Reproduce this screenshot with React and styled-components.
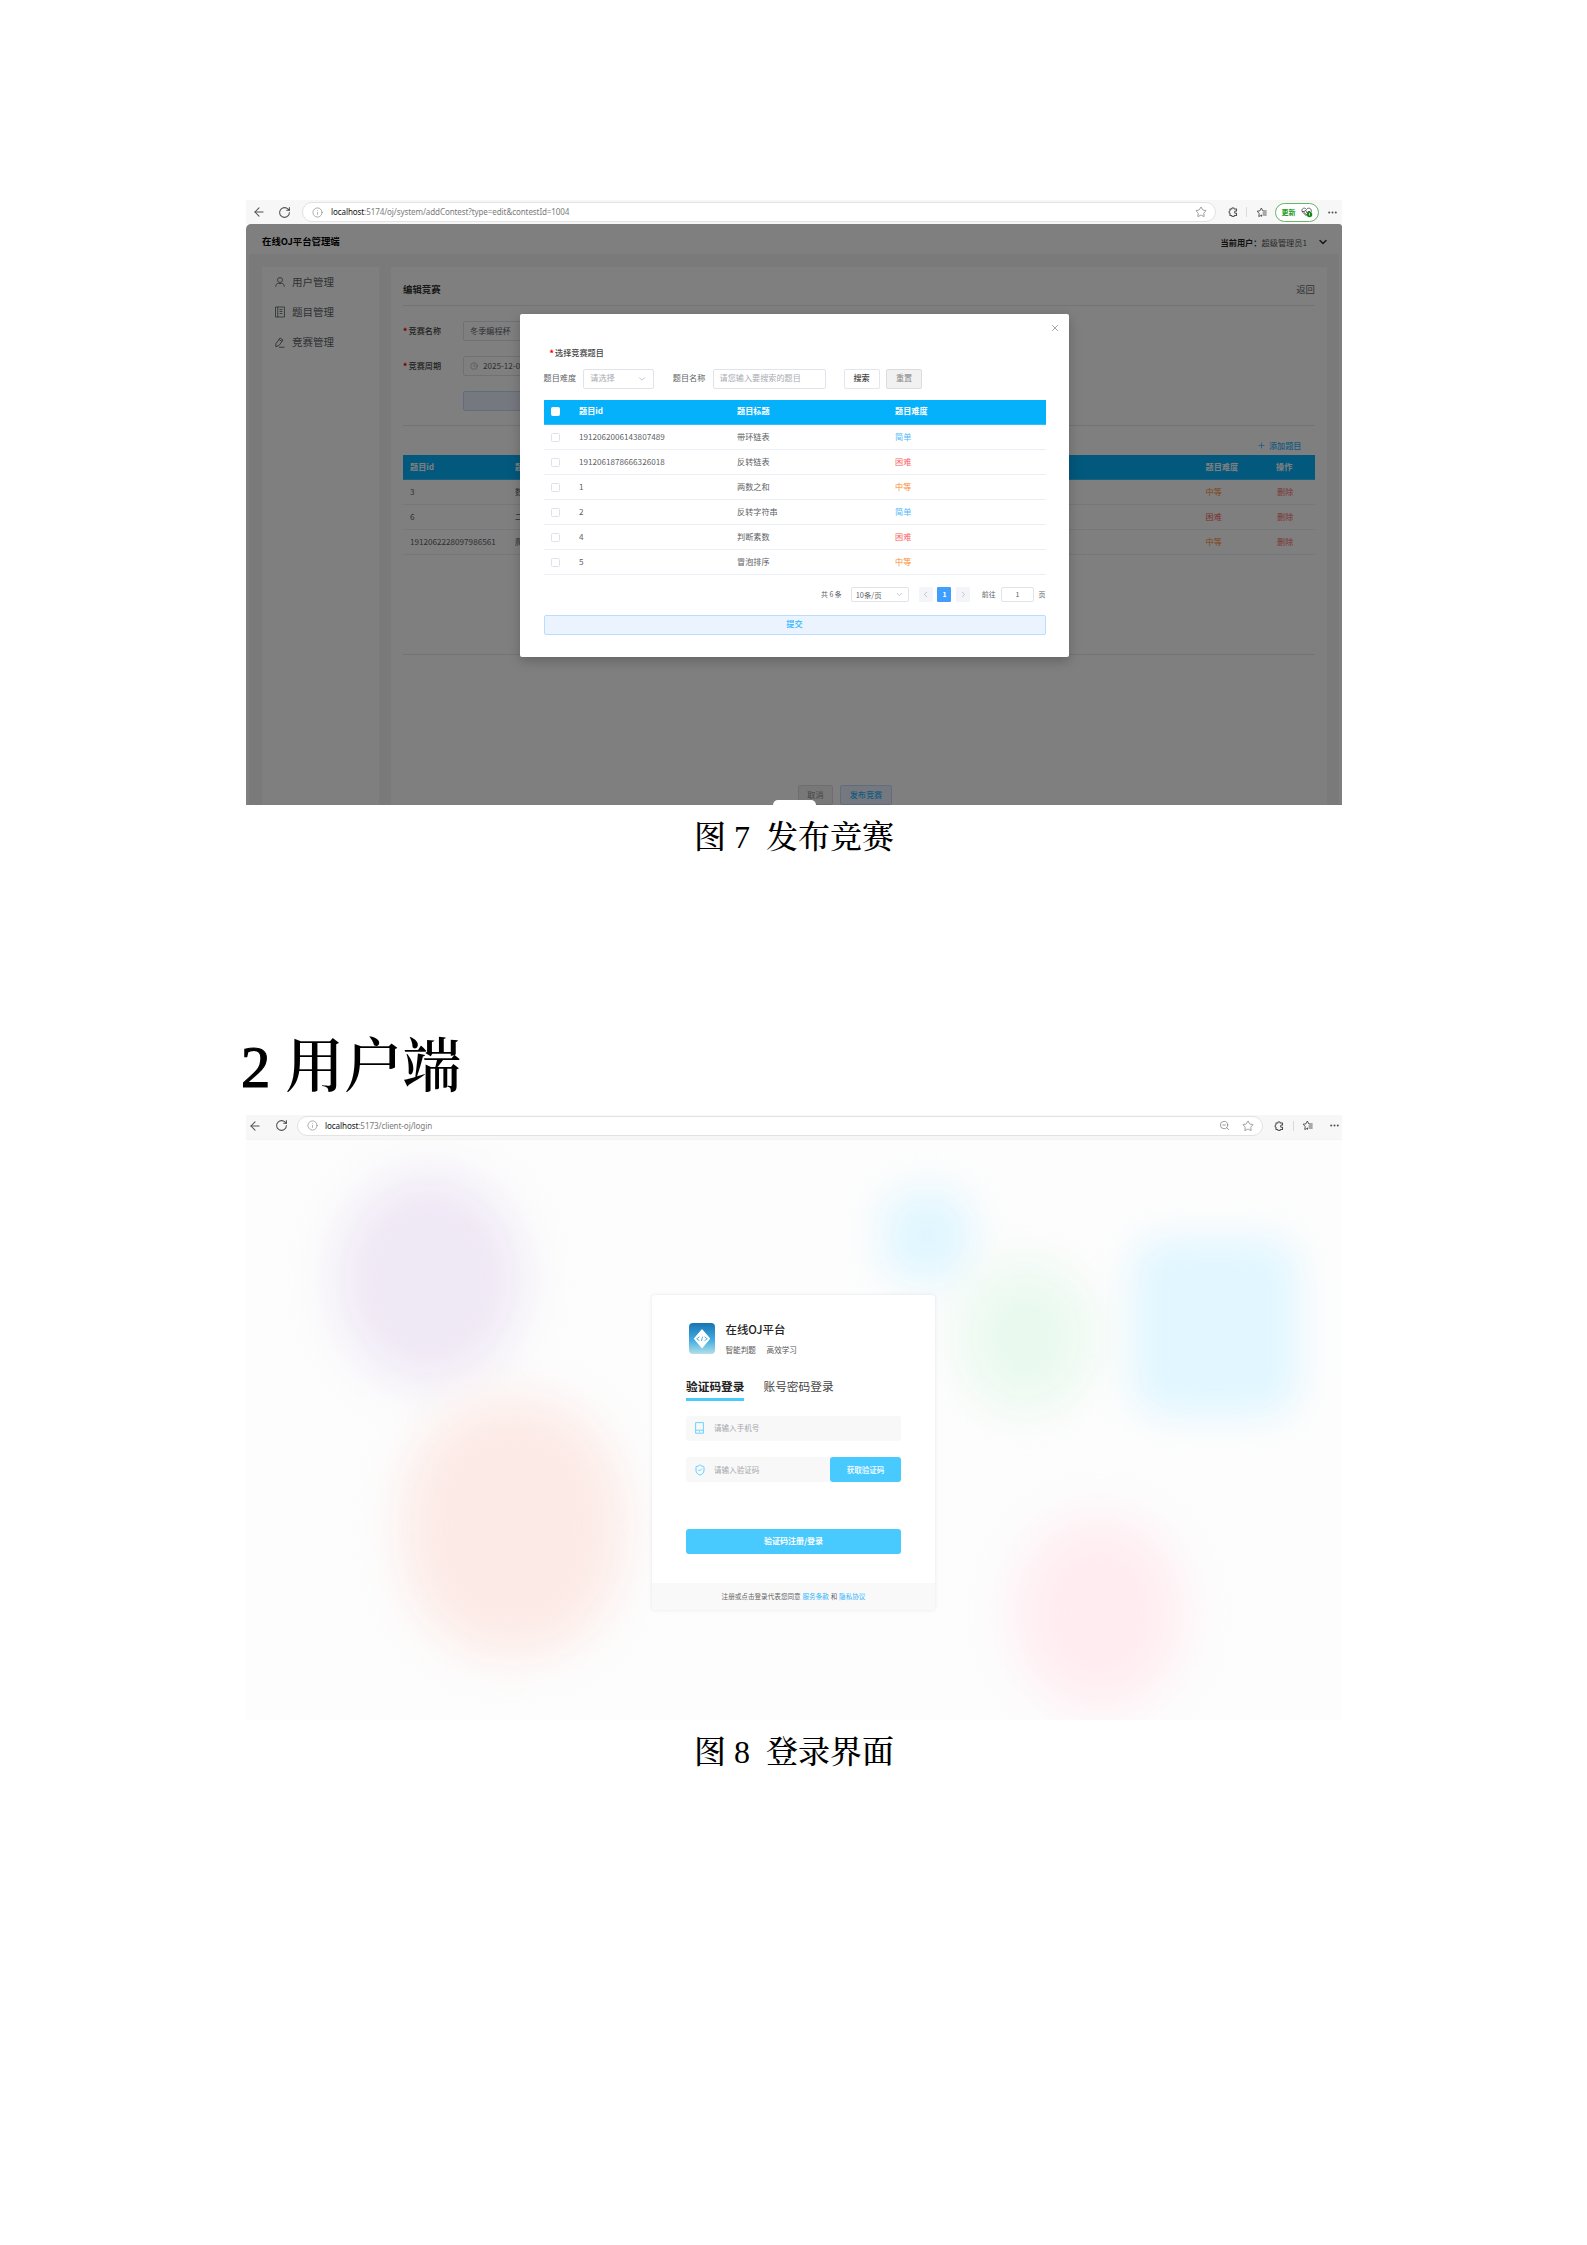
import React from "react";
import styled, { createGlobalStyle } from "styled-components";
import { ArrowLeft, ChevronDown, ChevronLeft, ChevronRight, Clock, Info, Plus, RotateCw, ShieldCheck, Star, X, ZoomOut } from "lucide-react";

const ui = `"Noto Sans CJK SC", "Noto Sans", sans-serif`;
const serif = `"Liberation Serif", "Noto Serif CJK SC", "Noto Sans CJK SC", serif`;

const Global = createGlobalStyle`
  * { box-sizing: border-box; }
  body { margin: 0; background: #fff; }
  svg { display: block; flex: none; }
`;

/* ---------- document ---------- */
const Page = styled.main`
  width: 1587px;
  height: 2245px;
  padding: 200px 245px 0 246px;
  overflow: hidden;
  background: #fff;
`;
const Shot = styled.section`
  width: 1096px;
  height: 605px;
  display: flex;
  flex-direction: column;
  overflow: hidden;
  font-family: ${ui};
  font-size: 8.15px;
  line-height: 1;
  white-space: nowrap;
`;
const Caption = styled.p`
  margin: 0;
  height: 62px;
  display: flex;
  justify-content: center;
  font: 500 32px/64px ${serif};
  color: #000;
  white-space: pre;
`;
const Heading = styled.h1`
  margin: 159px 0 9px -5px;
  height: 80px;
  display: flex;
  gap: 15px;
  font: 600 58.67px/84px ${serif};
  color: #000;
`;
const HeadingNumber = styled.span`
  width: 29.300px;
  font-weight: 400;
  -webkit-text-stroke: 1.200px #000;
`;

/* ---------- browser toolbar ---------- */
const Toolbar = styled.div`
  flex: none;
  height: 24px;
  display: flex;
  align-items: center;
  background: #f7f7f7;
  color: #505050;
  padding: ${(p) => (p.$login ? "0 3px 3px 2px" : "0 5.500px 0 6px")};
`;
const Reload = styled.span`
  margin: ${(p) => (p.$login ? "0 9.500px 0 12.500px" : "0 11px 0 12px")};
`;
const Address = styled.div`
  flex: 1;
  height: 20px;
  display: flex;
  align-items: center;
  gap: ${(p) => (p.$login ? 7 : 8)}px;
  padding: 0 8px 0 9px;
  border-radius: 10px;
  border: 1px solid #e2e2e2;
  background: #fff;
  color: #8a8a8a;
`;
const Url = styled.span`
  flex: 1;
  font: 400 ${(p) => p.$size}px/12px "Noto Sans", sans-serif;
  letter-spacing: -0.1px;
  color: #7c7c7c;
  b { font-weight: 400; color: #111; }
`;
const AddressActions = styled.span`
  display: flex;
  align-items: center;
  gap: 12px;
`;
const Tools = styled.div`
  display: flex;
  align-items: center;
  gap: 8.500px;
  margin-left: 11.500px;
  i { width: 1px; height: 10px; background: #dadada; }
`;
const Update = styled.span`
  height: 19px;
  width: 44px;
  display: flex;
  align-items: center;
  justify-content: center;
  gap: 5px;
  border: 1px solid #67b567;
  border-radius: 10px;
  background: #fff;
  color: #259b25;
  font-size: 7px;
  font-weight: 700;
`;

const PuzzleIcon = () => (
  <svg width="10" height="10" viewBox="0 0 20 20" fill="none" stroke="currentColor" strokeWidth="2.200" strokeLinejoin="round">
    <path d="M4 4h3.500a2.500 2.500 0 0 1 5 0H17v4h-1.500a2.300 2.300 0 0 0 0 4.600H17V17h-4.500a2.500 2.500 0 0 1-5 0H4v-4.500a2.600 2.600 0 0 1 0-5z" />
  </svg>
);
const FavoritesIcon = () => (
  <svg width="11" height="11" viewBox="0 0 22 22" fill="none" stroke="currentColor" strokeWidth="1.900" strokeLinejoin="round" strokeLinecap="round">
    <path d="M11 16.500 5.500 19l1-6.200L2 8.500l6-1L10.700 2l2.800 5.500M15 8h5.500M14 12h6.500M14 16h6.500M11 16.500v2" />
  </svg>
);
const DotsIcon = () => (
  <svg width="9" height="3" viewBox="0 0 9 3" fill="currentColor">
    <circle cx="1.200" cy="1.500" r="1" /><circle cx="4.500" cy="1.500" r="1" /><circle cx="7.800" cy="1.500" r="1" />
  </svg>
);
const HeartBadge = () => (
  <svg width="12" height="11" viewBox="0 0 24 22" fill="none">
    <path d="M11 18 3 10C-1 4 7-1 11 5c4-6 12-1 9 5M2 9h5l2-3 3 6 2-3h4M6 11l7 6" stroke="#555" strokeWidth="1.800" />
    <circle cx="17" cy="15" r="5.500" fill="#138a13" /><path d="M17 12v4M17 17v1" stroke="#fff" strokeWidth="1.400" />
  </svg>
);

/* ---------- admin app ---------- */
const Admin = styled.div`
  position: relative;
  height: 581px;
  display: flex;
  flex-direction: column;
  border-radius: 5px 3px 0 0;
  overflow: hidden;
  background: #fff;
  color: #606266;
`;
const AdminHeader = styled.header`
  flex: none;
  height: 30px;
  padding: 6px 13px 0 16px;
  display: flex;
  align-items: center;
  color: #333;
`;
const Brand = styled.strong`
  flex: 1;
  font-size: 9.4px;
  color: #000;
`;
const UserLabel = styled.span`
  display: flex;
  margin-right: 10px;
  font-size: 8.200px;
  color: #555;
  b { width: 41px; color: #222; }
`;
const AdminBody = styled.div`
  flex: 1;
  display: flex;
  gap: 12px;
  margin: 0 3px;
  padding: 13px 12px 0 13px;
  background: #f5f5f5;
`;
const Sidebar = styled.nav`
  width: 117px;
  flex: none;
  padding: 0 0 0 13px;
  background: #fff;
`;
const NavItem = styled.a`
  height: 30px;
  display: flex;
  align-items: center;
  gap: 7px;
  font-size: 10.500px;
  color: #606266;
`;
const Content = styled.div`
  flex: 1;
  padding: 0 12px;
  background: #fff;
`;
const ContentTitle = styled.div`
  height: 39px;
  padding-top: 7px;
  display: flex;
  align-items: center;
  justify-content: space-between;
  border-bottom: 1px solid #e6e6e6;
  font-size: 9.400px;
  color: #666;
  b { color: #333; }
`;
const Form = styled.div`
  display: flex;
  flex-direction: column;
  gap: 15px;
  height: 120px;
  padding-top: 15px;
  border-bottom: 1px solid #e6e6e6;
`;
const FormRow = styled.div`
  display: flex;
  align-items: center;
`;
const Required = styled.span`
  display: flex;
  width: ${(p) => p.$w || "auto"};
  color: #444;
  font-weight: 500;
  &::before { content: "*"; width: 5.500px; font-weight: 900; color: #f00; }
`;
const Box = styled.div`
  height: ${(p) => p.$h || 20}px;
  width: ${(p) => p.$w}px;
  display: flex;
  align-items: center;
  justify-content: ${(p) => (p.$split ? "space-between" : "flex-start")};
  gap: 5px;
  padding: 0 ${(p) => p.$px || 6}px;
  border: 1px solid #e0e3ea;
  border-radius: 2px;
  font-size: ${(p) => p.$size || 8.15}px;
  color: ${(p) => p.$color || "#a8abb2"};
  background: #fff;
`;
const Button = styled.div`
  height: 20px;
  width: ${(p) => (p.$w ? `${p.$w}px` : "auto")};
  margin-left: ${(p) => p.$ml || 0}px;
  display: flex;
  align-items: center;
  justify-content: center;
  border-radius: 2px;
  border: 1px solid ${(p) => ({ blue: "#bcdcff", grey: "#dcdcdc", plain: "#e3e6ec" })[p.$tone]};
  background: ${(p) => ({ blue: "#ebf3ff", grey: "#f1f1f1", plain: "#fff" })[p.$tone]};
  color: ${(p) => ({ blue: "#2cb5fc", grey: "#888", plain: "#444" })[p.$tone]};
  font-weight: ${(p) => (p.$strong ? 500 : 400)};
`;
const AddRow = styled.div`
  height: 28.500px;
  padding: 11px 13.500px 0 0;
  display: flex;
  align-items: center;
  justify-content: flex-end;
  gap: 3px;
  color: #2db7fd;
  font-weight: 500;
`;
const Table = styled.div`
  display: flex;
  flex-direction: column;
`;
const Row = styled.div`
  height: 25px;
  padding-top: 1.200px;
  display: grid;
  grid-template-columns: ${(p) => p.$cols};
  align-items: center;
  border-bottom: 1px solid #ebeef5;
`;
const HeadRow = styled(Row)`
  padding-top: ${(p) => (p.$low ? 1.2 : 0)}px;
  background: #06b1fb;
  border-color: #35befc;
  color: #fff;
  font-weight: 700;
`;
const Cell = styled.span`
  color: ${(p) => p.$color || "inherit"};
  padding-left: ${(p) => p.$pl || 0}px;
`;
const Blank = styled.div`
  height: 100px;
  border-bottom: 1px solid #e6e6e6;
`;
const Footer = styled.div`
  display: flex;
  margin-top: 130.500px;
  padding-left: 395px;
`;

const Overlay = styled.div`
  position: absolute;
  inset: 0;
  display: flex;
  justify-content: center;
  align-items: flex-start;
  padding-top: 90px;
  background: rgba(0, 0, 0, 0.5);
`;
const Dialog = styled.div`
  width: 549px;
  height: 343px;
  margin-left: 1px;
  padding: 9px 23.500px 0;
  border-radius: 2px;
  background: #fff;
  box-shadow: 0 4px 12px rgba(0, 0, 0, 0.22);
`;
const CloseRow = styled.div`
  height: 9px;
  margin-right: -14.500px;
  display: flex;
  justify-content: flex-end;
  color: #909399;
`;
const PickLabel = styled.div`
  height: 13px;
  margin: 15px 0 8.500px 6px;
  display: flex;
  align-items: center;
`;
const Filters = styled.div`
  display: flex;
  align-items: center;
  margin-bottom: 11px;
`;
const FieldLabel = styled.span`
  width: 39.800px;
  margin-left: ${(p) => p.$ml || 0}px;
`;
const Check = styled.span`
  width: 9px;
  height: 9px;
  margin-left: 7.400px;
  border: 1px solid ${(p) => (p.$head ? "#fff" : "#dfe2e9")};
  border-radius: 1.500px;
  background: #fff;
`;
const Pager = styled.div`
  display: flex;
  align-items: center;
  justify-content: flex-end;
  margin: 12px 0 12.500px;
  font-size: 6.900px;
`;
const PageBox = styled.span`
  width: 14px;
  height: 15.500px;
  margin-right: 4.700px;
  display: flex;
  align-items: center;
  justify-content: center;
  border-radius: 1px;
  background: ${(p) => (p.$on ? "#409eff" : "#f4f5f8")};
  color: ${(p) => (p.$on ? "#fff" : "#a8abb2")};
  font-weight: 700;
`;
const PagerText = styled.span`
  margin: ${(p) => p.$m};
`;
const PageButtons = styled.span`
  display: flex;
  margin-left: 9.500px;
`;
const JumpBox = styled(Box)`
  justify-content: center;
`;
const Bump = styled.div`
  position: absolute;
  left: 527px;
  bottom: 0;
  width: 43px;
  height: 5px;
  border-radius: 7px 7px 0 0;
  background: #fff;
`;

const UserIcon = () => (
  <svg width="10" height="10" viewBox="0 0 20 20" fill="none" stroke="currentColor" strokeWidth="1.700">
    <circle cx="10" cy="6" r="5" /><path d="M1.500 19.500c0-4.500 2-6.500 5-6.500h7c3 0 5 2 5 6.500" />
  </svg>
);
const ListIcon = () => (
  <svg width="10" height="12" viewBox="0 0 20 24" fill="none" stroke="currentColor" strokeWidth="1.700">
    <path d="M1 2h18v20H1zM5.500 2v20M9 7h6M9 11h6M9 15h6" />
  </svg>
);
const PenIcon = () => (
  <svg width="10" height="11" viewBox="0 0 20 22" fill="none" stroke="currentColor" strokeWidth="1.800" strokeLinejoin="round">
    <path d="m2 13 8-11 6 4-8 11-6.500 2.500zM8 5l6 4M8 20.500h11" />
  </svg>
);

const levels = { 简单: "#4fb8fb", 困难: "#f9605c", 中等: "#fb8a2e" };
const picked = [["3", "数", "中等"], ["6", "二", "困难"], ["1912062228097986561", "爬", "中等"]];
const problems = [
  ["1912062006143807489", "带环链表", "简单"],
  ["1912061878666326018", "反转链表", "困难"],
  ["1", "两数之和", "中等"],
  ["2", "反转字符串", "简单"],
  ["4", "判断素数", "困难"],
  ["5", "冒泡排序", "中等"],
];
const adminCols = "112px 690.500px 70.500px 1fr";
const dialogCols = "35.500px 158px 158px 1fr";

function AdminShot() {
  return (
    <Shot>
      <Toolbar>
        <ArrowLeft size={14} strokeWidth={1.800} />
        <Reload><RotateCw size={13} strokeWidth={1.900} /></Reload>
        <Address>
          <Info size={11} strokeWidth={1.500} />
          <Url $size={8.050}><b>localhost</b>:5174/oj/system/addContest?type=edit&amp;contestId=1004</Url>
          <Star size={12} strokeWidth={1.700} />
        </Address>
        <Tools>
          <PuzzleIcon /><i /><FavoritesIcon />
          <Update>更新<HeartBadge /></Update><DotsIcon />
        </Tools>
      </Toolbar>
      <Admin>
        <AdminHeader>
          <Brand>在线OJ平台管理端</Brand>
          <UserLabel><b>当前用户：</b>超级管理员1</UserLabel>
          <ChevronDown size={12} strokeWidth={3} />
        </AdminHeader>
        <AdminBody>
          <Sidebar>
            <NavItem><UserIcon />用户管理</NavItem>
            <NavItem><ListIcon />题目管理</NavItem>
            <NavItem><PenIcon />竞赛管理</NavItem>
          </Sidebar>
          <Content>
            <ContentTitle><b>编辑竞赛</b><span>返回</span></ContentTitle>
            <Form>
              <FormRow><Required $w="60px">竞赛名称</Required><Box $w={240} $color="#606266">冬季编程杯</Box></FormRow>
              <FormRow><Required $w="60px">竞赛周期</Required><Box $w={240} $color="#606266"><Clock size={8} strokeWidth={1.700} color="#999" />2025-12-01</Box></FormRow>
              <FormRow><Button $tone="blue" $w={240} $ml={60} /></FormRow>
            </Form>
            <AddRow><Plus size={9} strokeWidth={2} />添加题目</AddRow>
            <Table>
              <HeadRow $low $cols={adminCols}><Cell $pl={7}>题目id</Cell><Cell>题目标题</Cell><Cell>题目难度</Cell><Cell>操作</Cell></HeadRow>
              {picked.map(([id, title, level]) => (
                <Row key={id} $cols={adminCols}>
                  <Cell $pl={7}>{id}</Cell><Cell>{title}</Cell>
                  <Cell $color={levels[level]}>{level}</Cell><Cell $color="#f56c6c" $pl={1}>删除</Cell>
                </Row>
              ))}
            </Table>
            <Blank />
            <Footer><Button $tone="grey" $w={35}>取消</Button><Button $tone="blue" $w={52} $ml={7} $strong>发布竞赛</Button></Footer>
          </Content>
        </AdminBody>
        <Overlay>
          <Dialog>
            <CloseRow><X size={10} strokeWidth={2} /></CloseRow>
            <PickLabel><Required>选择竞赛题目</Required></PickLabel>
            <Filters>
              <FieldLabel>题目难度</FieldLabel>
              <Box $w={71} $split>请选择<ChevronDown size={10} strokeWidth={1.700} /></Box>
              <FieldLabel $ml={18.500}>题目名称</FieldLabel>
              <Box $w={113}>请您输入要搜索的题目</Box>
              <Button $tone="plain" $w={36} $ml={18} $strong>搜索</Button>
              <Button $tone="grey" $w={36} $ml={6.500}>重置</Button>
            </Filters>
            <Table>
              <HeadRow $cols={dialogCols}><Check $head /><Cell>题目id</Cell><Cell>题目标题</Cell><Cell>题目难度</Cell></HeadRow>
              {problems.map(([id, title, level]) => (
                <Row key={id} $cols={dialogCols}>
                  <Check /><Cell>{id}</Cell><Cell>{title}</Cell><Cell $color={levels[level]}>{level}</Cell>
                </Row>
              ))}
            </Table>
            <Pager>
              <PagerText $m="0 9px 0 0">共 6 条</PagerText>
              <Box $w={58.500} $h={15.500} $px={4} $size={7.400} $split $color="#606266">10条/页<ChevronDown size={9} strokeWidth={1.700} color="#a8abb2" /></Box>
              <PageButtons>
                <PageBox><ChevronLeft size={9} strokeWidth={1.800} /></PageBox>
                <PageBox $on>1</PageBox>
                <PageBox><ChevronRight size={9} strokeWidth={1.800} /></PageBox>
              </PageButtons>
              <PagerText $m="0 5.500px 0 7px">前往</PagerText>
              <JumpBox $w={32.500} $h={15.500} $size={7} $color="#606266">1</JumpBox>
              <PagerText $m="0 0 0 5px">页</PagerText>
            </Pager>
            <Button $tone="blue" $strong>提交</Button>
          </Dialog>
        </Overlay>
        <Bump />
      </Admin>
    </Shot>
  );
}

/* ---------- login page ---------- */
const Login = styled.div`
  position: relative;
  height: 581px;
  display: flex;
  justify-content: center;
  align-items: flex-start;
  padding-top: 155px;
  overflow: hidden;
  background: #fdfdfd;
  border-top: 1px solid #f3f3f3;
`;
const Blob = styled.div`
  position: absolute;
  left: ${(p) => p.$x}px;
  top: ${(p) => p.$y}px;
  width: ${(p) => p.$w}px;
  height: ${(p) => p.$h}px;
  border-radius: ${(p) => p.$r || "50%"};
  background: ${(p) => p.$c};
  filter: blur(${(p) => p.$b || 24}px);
`;
const Card = styled.div`
  position: relative;
  width: 283px;
  height: 315px;
  margin-left: -1px;
  display: flex;
  flex-direction: column;
  border-radius: 4px;
  background: #fff;
  box-shadow: 0 0 4px rgba(0, 0, 0, 0.09);
  overflow: hidden;
`;
const CardBody = styled.div`
  height: 288px;
  padding: 28px 34px 0;
`;
const BrandRow = styled.div`
  display: flex;
  gap: 11px;
  padding-left: 2.500px;
`;
const BrandText = styled.div`
  display: flex;
  flex-direction: column;
  gap: 10.500px;
  padding-top: 1px;
  b { font-size: 11.400px; font-weight: 500; color: #222; }
  span { font-size: 7.600px; color: #555; word-spacing: 9px; }
`;
const Tabs = styled.div`
  display: flex;
  gap: 19px;
  margin: 26px 0 14.500px;
`;
const Tab = styled.span`
  height: 21px;
  font-size: 11.700px;
  font-weight: ${(p) => (p.$on ? 700 : 400)};
  color: ${(p) => (p.$on ? "#222" : "#444")};
  border-bottom: 3px solid ${(p) => (p.$on ? "#48caff" : "transparent")};
`;
const Field = styled.div`
  height: 25.500px;
  margin-bottom: ${(p) => p.$mb}px;
  display: flex;
  align-items: center;
  gap: ${(p) => p.$gap}px;
  padding-left: ${(p) => p.$pl}px;
  border-radius: 3px;
  background: #f8f8f8;
  font-size: 7.550px;
  color: #a5a7ac;
`;
const Placeholder = styled.span`
  flex: 1;
`;
const Solid = styled.div`
  width: ${(p) => p.$w};
  height: 25px;
  display: flex;
  align-items: center;
  justify-content: center;
  border-radius: 3px;
  background: #48caff;
  color: #fff;
  font-size: ${(p) => p.$size}px;
  font-weight: ${(p) => p.$weight};
`;
const Agreement = styled.div`
  flex: 1;
  display: flex;
  align-items: center;
  justify-content: center;
  gap: 1.800px;
  background: #f9f9f9;
  font-size: 6.600px;
  color: #666;
  a { color: #32b5fc; }
`;

const Logo = () => (
  <svg width="26" height="31" viewBox="0 0 26 31" fill="none">
    <defs>
      <linearGradient id="logo" x1="0" y1="0" x2="0" y2="1">
        <stop offset="0" stopColor="#1674b3" /><stop offset="0.55" stopColor="#43ace0" /><stop offset="1" stopColor="#b2e0e8" />
      </linearGradient>
    </defs>
    <rect width="26" height="31" rx="4" fill="url(#logo)" />
    <path d="M13 7 20.500 15.700 13 24.500 5.500 15.700z" fill="#fff" stroke="#fff" strokeWidth="1.200" strokeLinejoin="round" />
    <path d="m10.500 13.800-2.800 2 2.800 2M15.500 13.800l2.800 2-2.800 2M13.600 13.600l-1.200 4.400" stroke="#45a9dc" strokeWidth="0.900" />
  </svg>
);
const PhoneIcon = () => (
  <svg width="9" height="12" viewBox="0 0 9 12" fill="none" stroke="#5ccfff" strokeWidth="0.900">
    <path d="M.6.600h7.800v10.600H.6zM.6 8.200h7.800M4 9.800h1" />
  </svg>
);

function LoginShot() {
  return (
    <Shot>
      <Toolbar $login>
        <ArrowLeft size={14} strokeWidth={1.800} />
        <Reload $login><RotateCw size={13} strokeWidth={1.900} /></Reload>
        <Address $login>
          <Info size={11} strokeWidth={1.500} />
          <Url $size={8.100}><b>localhost</b>:5173/client-oj/login</Url>
          <AddressActions><ZoomOut size={11} strokeWidth={1.800} /><Star size={12} strokeWidth={1.700} /></AddressActions>
        </Address>
        <Tools><PuzzleIcon /><i /><FavoritesIcon /><span /><DotsIcon /></Tools>
      </Toolbar>
      <Login>
        <Blob $x={88} $y={32} $w={190} $h={214} $c="#efe8f5" />
        <Blob $x={156} $y={258} $w={222} $h={258} $c="#fceae6" $r="46%" />
        <Blob $x={638} $y={52} $w={86} $h={88} $c="#dff6ff" $r="30%" $b={20} />
        <Blob $x={714} $y={123} $w={132} $h={148} $c="#e9f9ee" />
        <Blob $x={886} $y={98} $w={166} $h={178} $c="#e1f6ff" $r="32px" $b={18} />
        <Blob $x={768} $y={376} $w={170} $h={194} $c="#ffecf1" />
        <Card>
          <CardBody>
            <BrandRow><Logo /><BrandText><b>在线OJ平台</b><span>智能判题 高效学习</span></BrandText></BrandRow>
            <Tabs><Tab $on>验证码登录</Tab><Tab>账号密码登录</Tab></Tabs>
            <Field $mb={15.900} $pl={9} $gap={10}><PhoneIcon /><Placeholder>请输入手机号</Placeholder></Field>
            <Field $mb={46.500} $pl={7.500} $gap={8.500}>
              <ShieldCheck size={12} strokeWidth={1.900} color="#5ccfff" />
              <Placeholder>请输入验证码</Placeholder>
              <Solid $w="71px" $size={7.550} $weight={500}>获取验证码</Solid>
            </Field>
            <Solid $w="100%" $size={8} $weight={700}>验证码注册/登录</Solid>
          </CardBody>
          <Agreement>注册或点击登录代表您同意<a>服务条款</a>和<a>隐私协议</a></Agreement>
        </Card>
      </Login>
    </Shot>
  );
}

export default function App() {
  return (
    <>
      <Global />
      <Page>
        <AdminShot />
        <Caption>{"图 7  发布竞赛"}</Caption>
        <Heading><HeadingNumber>2</HeadingNumber>用户端</Heading>
        <LoginShot />
        <Caption>{"图 8  登录界面"}</Caption>
      </Page>
    </>
  );
}
